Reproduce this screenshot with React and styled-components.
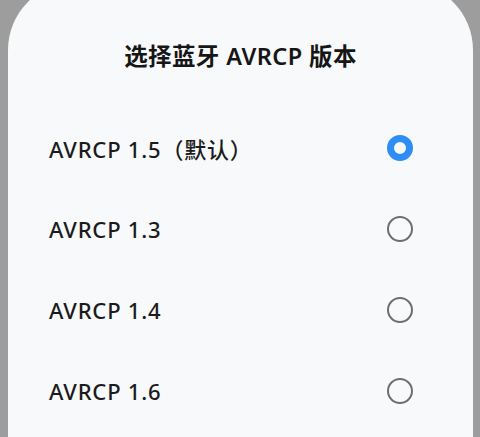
import { useState } from 'react';
import styled, { createGlobalStyle } from 'styled-components';

const GlobalStyle = createGlobalStyle`
  html, body {
    margin: 0;
    padding: 0;
    background: #9d9d9d;
    overflow: hidden;
  }
  body {
    font-family: "Noto Sans", "Noto Sans CJK SC", sans-serif;
  }
`;

const options = ['AVRCP 1.5（默认）', 'AVRCP 1.3', 'AVRCP 1.4', 'AVRCP 1.6'];

export default function App() {
  const [selected, setSelected] = useState(0);

  return (
    <>
      <GlobalStyle />
      <Sheet>
        <Title>选择蓝牙 AVRCP 版本</Title>
        <List>
          {options.map((label, i) => (
            <Row key={label} onClick={() => setSelected(i)}>
              <Label>{label}</Label>
              <Radio $checked={selected === i} />
            </Row>
          ))}
        </List>
      </Sheet>
    </>
  );
}

const Sheet = styled.div`
  margin: -18px 7px 0 8px;
  height: 455px;
  background: #f8f9fb;
  border-radius: 68px 68px 0 0;
  padding-top: 43px;
  box-sizing: border-box;
  overflow: hidden;
`;

const Title = styled.div`
  height: 60px;
  display: flex;
  align-items: center;
  justify-content: center;
  font-size: 23.5px;
  font-weight: 600;
  color: #161616;
  letter-spacing: 0.4px;
`;

const List = styled.div`
  margin-top: 22px;
  display: flex;
  flex-direction: column;
`;

const Row = styled.div`
  height: 81px;
  display: flex;
  align-items: center;
  justify-content: space-between;
  padding: 0 60px 0 41px;
  cursor: pointer;
`;

const Label = styled.span`
  font-size: 22px;
  font-weight: 500;
  color: #1b1b1b;
  letter-spacing: 0.8px;
`;

const Radio = styled.span`
  width: 26px;
  height: 26px;
  box-sizing: border-box;
  border-radius: 50%;
  border: ${p => (p.$checked ? '7.5px solid #2e8ef5' : '2.5px solid #6e6e6e')};
`;
